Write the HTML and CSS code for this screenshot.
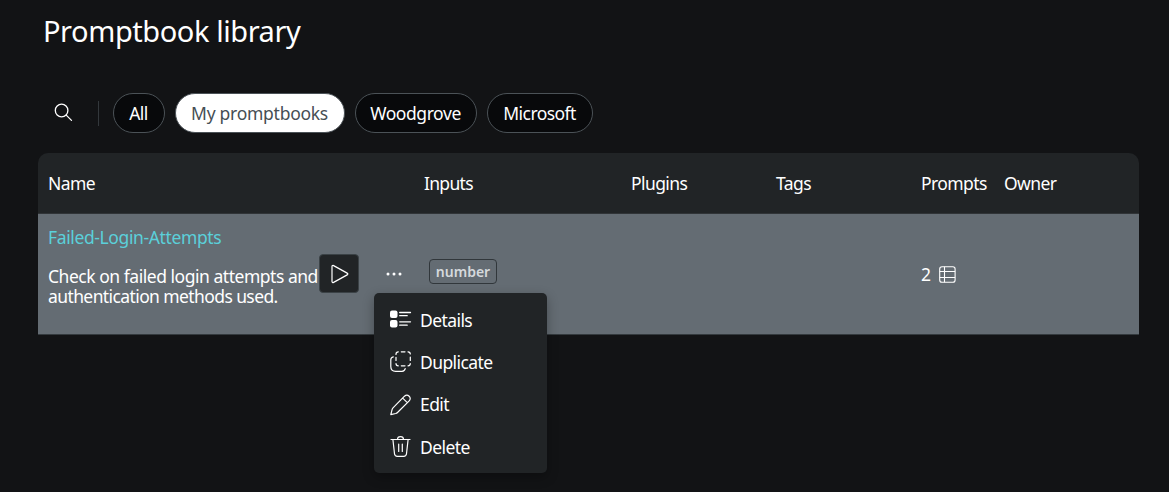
FILE: index.html
```html
<!DOCTYPE html>
<html lang="en">
<head>
<meta charset="utf-8">
<title>Promptbook library</title>
<link rel="stylesheet" href="styles.css">
</head>
<body>
<main class="page">
  <h1 class="title">Promptbook library</h1>
  <div class="filters">
    <button class="search" aria-label="Search">
      <svg width="20" height="20" viewBox="0 0 20 20" fill="none" stroke="currentColor" stroke-width="1.3" stroke-linecap="round"><circle cx="7.600" cy="7.500" r="6.300"/><path d="M12.200 12.100 17.500 17.400"/></svg>
    </button>
    <span class="divider"></span>
    <button class="pill pill-all">All</button>
    <button class="pill pill-mine">My promptbooks</button>
    <button class="pill pill-org">Woodgrove</button>
    <button class="pill pill-ms">Microsoft</button>
  </div>
  <section class="table">
    <div class="row head">
      <span>Name</span><span class="h-inputs">Inputs</span><span>Plugins</span><span>Tags</span><span>Prompts</span><span>Owner</span>
    </div>
    <div class="row item">
      <div class="name-cell">
        <a class="link">Failed-Login-Attempts</a>
        <p class="desc"><span class="line">Check on failed login attempts and</span> <span class="line">authentication methods used.</span></p>
      </div>
      <div class="actions">
        <button class="play" aria-label="Run">
          <svg width="20" height="20" viewBox="0 0 20 20" fill="none" stroke="currentColor" stroke-width="1.2" stroke-linejoin="round"><path d="M2 2.500c0-.8.8-1.300 1.600-.9l13.600 7.500c.8.4.8 1.400 0 1.800L3.600 18.400c-.8.4-1.600-.1-1.600-.9z"/></svg>
        </button>
        <button class="more" aria-label="More">
          <svg width="18" height="6" viewBox="0 0 18 6" fill="currentColor"><circle cx="3" cy="3" r="1.500"/><circle cx="9" cy="3" r="1.500"/><circle cx="15" cy="3" r="1.500"/></svg>
        </button>
        <div class="menu">
          <div class="menu-item"><svg width="22" height="22" viewBox="0 0 22 22" fill="none" stroke="currentColor" stroke-width="1.300" stroke-linecap="round"><g fill="currentColor" stroke="none"><rect x="0" y="1.500" width="7.500" height="7.500" rx="2"/><rect x="0" y="11" width="7.500" height="7.500" rx="2"/></g><path d="M9.700 3.500H20.500M9.700 6.700H17.200M9.700 12.800H20.500M9.700 16.200H17.200"/></svg><span>Details</span></div>
          <div class="menu-item"><svg width="22" height="22" viewBox="0 1 22 22" fill="none" stroke="currentColor" stroke-width="1.200" stroke-linecap="round"><path d="M6 4.500V4A2.300 2.300 0 0 1 8.300 1.800M11.300 1.800H15M18 1.800A2.300 2.300 0 0 1 20.300 4M20.300 7V10.500M20.300 13.500A2.300 2.300 0 0 1 18 15.800M15 15.800H11.300M8.300 15.800A2.300 2.300 0 0 1 6 13.500M6 10.500V7.300"/><path d="M3.300 6.800C1.700 7.100.8 8.200.8 9.800V16.500Q.8 21.300 5.600 21.300H12C13.700 21.300 14.900 20.300 15.200 18.700"/></svg><span>Duplicate</span></div>
          <div class="menu-item"><svg width="22" height="22" viewBox="0 0 22 22" fill="none" stroke="currentColor" stroke-width="1.200" stroke-linejoin="round"><path d="M14.500 2.200C17.600-.8 22.300 3.700 19.200 6.800L7.500 18.500C7 19 6.400 19.300 5.700 19.500L.8 20.700 2 15.800C2.200 15 2.500 14.400 3 13.900zM12.700 4.100 17.300 8.700"/></svg><span>Edit</span></div>
          <div class="menu-item"><svg width="22" height="22" viewBox="0 0 22 22" fill="none" stroke="currentColor" stroke-width="1.200" stroke-linecap="round" stroke-linejoin="round"><path d="M1 3.500H20M7.500 3.500C7.500-.3 13.500-.3 13.500 3.500M2.900 3.500 4.500 17.700C4.700 19.400 5.700 20.300 7.300 20.300H13.700C15.300 20.300 16.300 19.400 16.500 17.700L18.100 3.500M8.700 8V15.500M12.300 8V15.500"/></svg><span>Delete</span></div>
        </div>
      </div>
      <div class="inputs-cell"><span class="tag">number</span></div>
      <div></div>
      <div></div>
      <div class="prompts-cell"><span>2</span><svg width="17" height="17" viewBox="0 0 17 17" fill="none" stroke="currentColor" stroke-width="1.100"><rect x=".7" y=".7" width="15.400" height="15.600" rx="2.300"/><path d="M5.500.7V16.300M.7 5.500H16.100M.7 11.500H16.100"/></svg></div>
      <div></div>
    </div>
  </section>
</main>
</body>
</html>
```
FILE: styles.css
```css
* { box-sizing: border-box; }
body {
  margin: 0;
  height: 492px;
  overflow: hidden;
  background: #121315;
  color: #fff;
  font-family: "Noto Sans", "Open Sans", sans-serif;
  font-size: 17.5px;
  line-height: 20px;
  letter-spacing: -0.58px;
  white-space: nowrap;
}
button {
  margin: 0;
  padding: 0;
  border: 0;
  background: none;
  color: inherit;
  font: inherit;
  letter-spacing: inherit;
}
svg { display: block; flex: none; }
.page { padding: 11px 30px 0 38px; }
.title {
  margin: 0 0 42px 5px;
  font-size: 29px;
  font-weight: 400;
  line-height: 40px;
  height: 40px;
  letter-spacing: -0.43px;
}
.filters { display: flex; align-items: center; height: 40px; }
.search { margin-left: 16px; }
.divider { width: 1px; height: 25px; margin: 0 14px 0 24px; background: #33383c; }
.pill {
  height: 40px;
  margin-right: 10px;
  padding: 0 1px 1px 0;
  border: 1px solid #4b5257;
  border-radius: 20px;
  background: #08090b;
}
.pill-all { width: 52px; }
.pill-mine { width: 170px; background: #fff; color: #464e54; letter-spacing: -0.27px; }
.pill-org { width: 122px; letter-spacing: -0.42px; }
.pill-ms { width: 106px; }
.table {
  width: 1101px;
  margin-top: 20px;
  border-radius: 10px 10px 0 0;
  background: #212426;
}
.row { display: grid; padding-left: 10px; }
.head {
  grid-template-columns: 376px 207px 145px 145px 83px 1fr;
  align-items: center;
  height: 61px;
  border-bottom: 1px solid #303437;
}
.h-inputs { letter-spacing: -0.7px; }
.item {
  grid-template-columns: 271px 105px 207px 145px 145px 83px 1fr;
  height: 121px;
  border-bottom: 1px solid #343a3e;
  background: #646c73;
}
.name-cell { padding-top: 13px; }
.link { display: block; color: #5bd0da; letter-spacing: -0.38px; }
.desc { margin: 19px 0 0; letter-spacing: -0.47px; }
.line { display: block; }
.line + .line { letter-spacing: -0.6px; }
.actions { position: relative; display: flex; padding-top: 40px; }
.play {
  display: grid;
  place-items: center;
  width: 40px;
  height: 39px;
  border: 1px solid #3b4246;
  border-radius: 4px;
  background: #212426;
}
.play svg { margin-left: 2px; }
.more { width: 18px; height: 39px; margin-left: 25.5px; }
.inputs-cell { padding: 45px 0 0 5px; }
.tag {
  display: flex;
  align-items: center;
  justify-content: center;
  width: 68px;
  height: 25px;
  border: 1px solid #31373b;
  border-radius: 4px;
  color: #d5d9dc;
  font-size: 14px;
  font-weight: 600;
  letter-spacing: 0;
}
.prompts-cell { display: flex; align-items: center; gap: 9px; height: 120px; }
.menu {
  position: absolute;
  z-index: 2;
  top: 79px;
  left: 55px;
  width: 173px;
  height: 180px;
  padding: 6px 0 0 16px;
  border-radius: 5px;
  background: #212426;
  box-shadow: 0 4px 12px rgba(0, 0, 0, .3);
}
.menu-item { display: flex; align-items: center; gap: 8px; height: 42.3px; }
.menu-item span { padding-bottom: 1px; }
```
